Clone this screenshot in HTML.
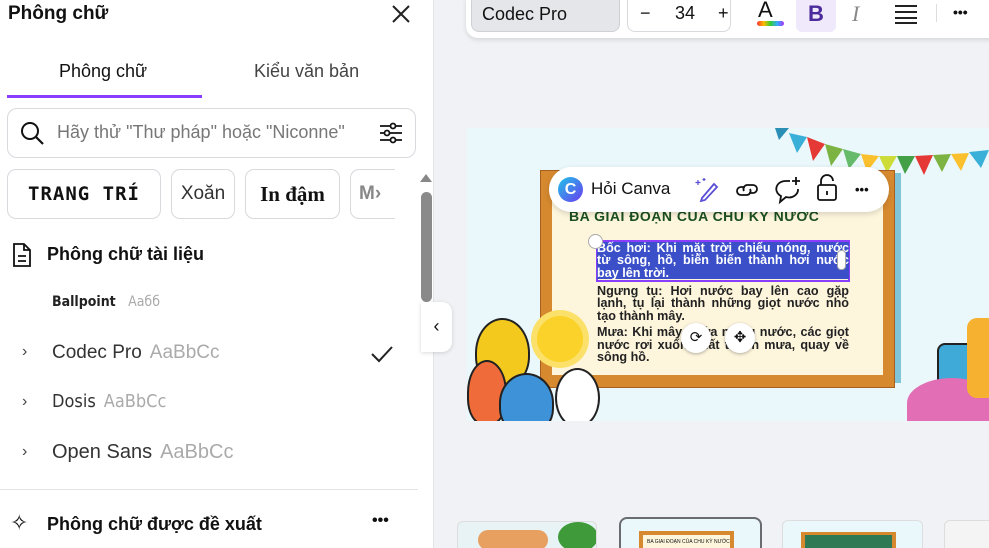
<!DOCTYPE html><html><head><meta charset="utf-8"><style>
*{box-sizing:border-box;margin:0;padding:0}
html,body{width:989px;height:548px;overflow:hidden}
body{background:#f1f2f5;font-family:"Liberation Sans","Noto Sans CJK SC",sans-serif;position:relative;color:#111}
.a{position:absolute}
.panel{left:0;top:0;width:434px;height:548px;background:#fff;border-right:1px solid #e3e4e8}
.b{font-weight:bold}
.chip{position:absolute;top:169px;height:50px;border:1px solid #d8d9dd;border-radius:9px;background:#fff;display:flex;align-items:center;justify-content:center;font-size:19px}
.fn{position:absolute;left:52px;font-size:19px;color:#333}
.fn span{color:#aaa;margin-left:8px}
.chev{position:absolute;left:22px;font-size:16px;color:#444}
.st{position:absolute;left:130px;width:252px;font-weight:bold;font-size:12.6px;line-height:12.3px;color:#222;text-align:justify}
</style></head><body>
<div class="a panel">
 <div class="a b" style="left:8px;top:3px;font-size:19px">Phông chữ</div>
 <svg class="a" style="left:390px;top:3px" width="22" height="22" viewBox="0 0 22 22"><path d="M3 3L19 19M19 3L3 19" stroke="#222" stroke-width="2"/></svg>
 <div class="a" style="left:59px;top:61px;font-size:18px">Phông chữ</div>
 <div class="a" style="left:254px;top:61px;font-size:18px;color:#444">Kiểu văn bản</div>
 <div class="a" style="left:7px;top:95px;width:195px;height:3px;background:#8b3dff"></div>
 <div class="a" style="left:7px;top:108px;width:409px;height:50px;border:1px solid #d8d9dd;border-radius:10px"></div>
 <svg class="a" style="left:20px;top:121px" width="26" height="26" viewBox="0 0 26 26"><circle cx="10" cy="10" r="8" fill="none" stroke="#111" stroke-width="2"/><path d="M16 16L23 23" stroke="#111" stroke-width="2.2"/></svg>
 <div class="a" style="left:57px;top:122px;font-size:18px;color:#777">Hãy thử "Thư pháp" hoặc "Niconne"</div>
 <svg class="a" style="left:378px;top:120px" width="26" height="26" viewBox="0 0 26 26" fill="none" stroke="#111" stroke-width="1.8"><path d="M2 6H24M2 13H24M2 20H24"/><circle cx="15" cy="6" r="2.5" fill="#fff"/><circle cx="9" cy="13" r="2.5" fill="#fff"/><circle cx="15" cy="20" r="2.5" fill="#fff"/></svg>
 <div class="chip b" style="left:7px;width:154px;font-family:'DejaVu Sans Mono';font-size:19px;letter-spacing:1px">TRANG TRÍ</div>
 <div class="chip" style="left:171px;width:64px;color:#333">Xoăn</div>
 <div class="chip b" style="left:245px;width:95px;font-family:'Liberation Serif';font-size:21px">In đậm</div>
 <div class="chip b" style="left:350px;width:45px;border-right:none;border-radius:9px 0 0 9px;color:#888;justify-content:flex-start;padding-left:8px">M›</div>
 <div class="a" style="left:420px;top:174px;width:0;height:0;border-left:6px solid transparent;border-right:6px solid transparent;border-bottom:8px solid #888"></div>
 <div class="a" style="left:421px;top:192px;width:11px;height:110px;background:#8a8a8a;border-radius:6px"></div>
 <svg class="a" style="left:12px;top:242px" width="20" height="26" viewBox="0 0 20 26" fill="none" stroke="#111" stroke-width="1.8"><path d="M2 2H12L18 8V24H2Z M12 2V8H18 M6 14H14M6 19H14"/></svg>
 <div class="a b" style="left:47px;top:244px;font-size:18px">Phông chữ tài liệu</div>
 <div class="fn" style="top:294px;font-size:14px;font-weight:bold;color:#222;font-family:'DejaVu Sans Condensed'">Ballpoint <span style="font-weight:normal">Aaбб</span></div>
 <div class="chev" style="top:343px">›</div><div class="fn" style="top:342px">Codec Pro<span>AaBbCc</span></div>
 <svg class="a" style="left:370px;top:344px" width="24" height="20" viewBox="0 0 24 20"><path d="M2 10L9 17L22 3" stroke="#222" stroke-width="2" fill="none"/></svg>
 <div class="chev" style="top:393px">›</div><div class="fn" style="top:391px;font-family:'DejaVu Sans Condensed';font-size:18px">Dosis<span>AaBbCc</span></div>
 <div class="chev" style="top:443px">›</div><div class="fn" style="top:441px;font-size:20px">Open Sans<span>AaBbCc</span></div>
 <div class="a" style="left:0;top:489px;width:418px;height:1px;background:#e2e3e6"></div>
 <div class="a" style="left:10px;top:510px;font-size:22px">✧</div>
 <div class="a b" style="left:47px;top:514px;font-size:18px">Phông chữ được đề xuất</div>
 <div class="a b" style="left:372px;top:512px;font-size:16px">•••</div>
</div>
<div class="a" style="left:421px;top:302px;width:31px;height:50px;background:#fff;border-radius:0 10px 10px 0;box-shadow:0 1px 4px rgba(0,0,0,.15);font-size:18px;text-align:center;line-height:48px">‹</div>
<!-- top toolbar -->
<div class="a" style="left:466px;top:-10px;width:540px;height:48px;background:#fff;border-radius:12px;box-shadow:0 2px 5px rgba(0,0,0,.12)"></div>
<div class="a" style="left:471px;top:-6px;width:149px;height:38px;background:#e5e6ea;border:1px solid #cfd0d4;border-radius:8px;font-size:18px;padding:9px 10px">Codec Pro</div>
<div class="a" style="left:627px;top:-6px;width:104px;height:38px;border:1px solid #d8d9dd;border-radius:8px"></div>
<div class="a" style="left:640px;top:3px;font-size:18px">−</div><div class="a" style="left:675px;top:3px;font-size:18px">34</div><div class="a" style="left:718px;top:3px;font-size:18px">+</div>
<div class="a" style="left:758px;top:-3px;font-size:22px">A</div>
<div class="a" style="left:757px;top:21px;width:27px;height:5px;border-radius:3px;background:linear-gradient(90deg,#f33,#fb0,#3c3,#3af,#a3f)"></div>
<div class="a b" style="left:796px;top:-5px;width:40px;height:37px;background:#efe9fb;border-radius:6px;color:#4b2a9b;font-size:22px;text-align:center;padding-top:6px">B</div>
<div class="a" style="left:852px;top:1px;font-size:22px;font-style:italic;color:#888;font-family:'Liberation Serif'">I</div>
<svg class="a" style="left:894px;top:4px" width="24" height="20"><path d="M1 2H23M1 8H23M1 14H23M1 19H23" stroke="#222" stroke-width="2"/></svg>
<div class="a" style="left:936px;top:4px;width:1px;height:18px;background:#ddd"></div>
<div class="a b" style="left:953px;top:4px;font-size:14px">•••</div>
<!-- slide -->
<div class="a" style="left:467px;top:128px;width:522px;height:293px;background:#eaf8fc;overflow:hidden">
 <svg class="a" style="left:300px;top:0" width="222" height="50"><g>
 <path d="M8 0L22 0 12 12Z" fill="#2b8fb5"/><path d="M22 5L40 9 30 25Z" fill="#3ab0d8"/><path d="M40 9L58 16 46 33Z" fill="#e53935"/><path d="M58 16L76 21 64 38Z" fill="#7cb342"/><path d="M76 21L94 26 82 41Z" fill="#66bb6a"/><path d="M94 26L112 28 100 44Z" fill="#fbc02d"/><path d="M112 28L130 28 120 45Z" fill="#cddc39"/><path d="M130 28L148 28 138 46Z" fill="#43a047"/><path d="M148 28L166 27 157 47Z" fill="#e53935"/><path d="M166 27L184 26 175 44Z" fill="#7cb342"/><path d="M184 26L202 25 194 43Z" fill="#fbc02d"/><path d="M202 24L222 22 214 40Z" fill="#3ab0d8"/></g></svg>
 <div class="a" style="left:73px;top:42px;width:355px;height:218px;background:#d6892f;border:1px solid #a86020"></div>
 <div class="a" style="left:428px;top:45px;width:6px;height:210px;background:#7fc4d8"></div>
 <div class="a" style="left:85px;top:54px;width:331px;height:193px;background:#fdf5dc"></div>
 <div class="a b" style="left:102px;top:80px;font-size:14px;color:#1a5020;letter-spacing:.5px">BA GIAI ĐOẠN CỦA CHU KỲ NƯỚC</div>
 <div class="a" style="left:129px;top:112px;width:254px;height:42px;border:2px solid #8b3dff"></div>
 <div class="st" style="top:114px;color:#fff;background:#3a4fc8">Bốc hơi: Khi mặt trời chiếu nóng, nước từ sông, hồ, biển biến thành hơi nước bay lên trời.</div>
 <div class="st" style="top:157px">Ngưng tụ: Hơi nước bay lên cao gặp lạnh, tụ lại thành những giọt nước nhỏ tạo thành mây.</div>
 <div class="st" style="top:198px;line-height:12.7px">Mưa: Khi mây chứa nhiều nước, các giọt nước rơi xuống đất thành mưa, quay về sông hồ.</div>
 <div class="a" style="left:121px;top:106px;width:15px;height:15px;border-radius:50%;background:#fff;border:1px solid #aaa"></div>
 <div class="a" style="left:370px;top:122px;width:9px;height:20px;border-radius:4px;background:#fff;border:1px solid #aaa"></div>
 <div class="a" style="left:214px;top:195px;width:30px;height:30px;border-radius:50%;background:#fff;box-shadow:0 1px 3px rgba(0,0,0,.3);text-align:center;line-height:30px;font-size:15px">⟳</div>
 <div class="a" style="left:258px;top:195px;width:30px;height:30px;border-radius:50%;background:#fff;box-shadow:0 1px 3px rgba(0,0,0,.3);text-align:center;line-height:30px;font-size:15px">✥</div>
 <div class="a" style="left:8px;top:190px;width:55px;height:70px;background:#f4c91e;border:2px solid #222;border-radius:50% 50% 45% 45%"></div>
 <div class="a" style="left:0;top:232px;width:40px;height:65px;background:#ef6c3a;border:2px solid #222;border-radius:50% 50% 40% 40%"></div>
 <div class="a" style="left:32px;top:245px;width:55px;height:60px;background:#3d92d8;border:2px solid #222;border-radius:50% 50% 40% 40%"></div>
 <div class="a" style="left:88px;top:240px;width:45px;height:60px;background:#fff;border:2px solid #222;border-radius:50%"></div>
 <div class="a" style="left:70px;top:188px;width:46px;height:46px;border-radius:50%;background:#fbd22a;box-shadow:0 0 0 6px #fbe16a"></div>
 <div class="a" style="left:470px;top:215px;width:45px;height:45px;background:#3fa9d8;border:2px solid #222;border-radius:8px"></div>
 <div class="a" style="left:440px;top:250px;width:90px;height:50px;border-radius:50% 50% 0 0;background:#e26fb5"></div>
 <div class="a" style="left:500px;top:190px;width:30px;height:80px;background:#f6b130;border-radius:10px"></div>
</div>
<!-- floating pill -->
<div class="a" style="left:549px;top:167px;width:340px;height:45px;background:#fff;border-radius:23px;box-shadow:0 2px 6px rgba(0,0,0,.15)"></div>
<div class="a" style="left:558px;top:177px;width:25px;height:25px;border-radius:50%;background:linear-gradient(135deg,#20c4e8,#6a3cf0);color:#fff;font-weight:bold;text-align:center;line-height:25px;font-size:16px">C</div>
<div class="a" style="left:591px;top:179px;font-size:17px">Hỏi Canva</div>
<svg class="a" style="left:694px;top:176px" width="26" height="26" viewBox="0 0 26 26" fill="none" stroke="#5a4fd6" stroke-width="1.8"><path d="M8 22L20 8 23 11 11 24 7 25Z"/><path d="M4 4V9M1.5 6.5H6.5M10 2V5M8.5 3.5H11.5" stroke-width="1.2"/></svg>
<svg class="a" style="left:734px;top:179px" width="26" height="22" viewBox="0 0 26 22" fill="none" stroke="#111" stroke-width="1.8"><path d="M11 8H7a4 4 0 0 0 0 8h6a4 4 0 0 0 3-6M15 14h4a4 4 0 0 0 0-8h-6a4 4 0 0 0-3 6"/></svg>
<svg class="a" style="left:773px;top:175px" width="30" height="30" viewBox="0 0 30 30" fill="none" stroke="#111" stroke-width="1.8"><path d="M17 6H13a9 8 0 0 0-5 15L7 27 13 22a9 8 0 0 0 12-8"/><path d="M23 2V10M19 6H27"/></svg>
<svg class="a" style="left:815px;top:173px" width="24" height="30" viewBox="0 0 24 30" fill="none" stroke="#111" stroke-width="1.8"><path d="M6 12V8a6 6 0 0 1 12 0"/><rect x="3" y="12" width="18" height="15" rx="2"/><path d="M12 18V22"/></svg>
<div class="a b" style="left:855px;top:182px;font-size:13px">•••</div>
<!-- thumbnails -->
<div class="a" style="left:457px;top:521px;width:140px;height:27px;background:#e8f3f6;border:1px solid #ddd;border-bottom:none;border-radius:6px 6px 0 0;overflow:hidden"><div class="a" style="left:100px;top:0;width:40px;height:30px;background:#3f9a3a;border-radius:50%"></div><div class="a" style="left:20px;top:8px;width:70px;height:20px;background:#e8a060;border-radius:10px"></div></div>
<div class="a" style="left:619px;top:517px;width:143px;height:31px;border:2px solid #6b6c72;border-bottom:none;border-radius:8px 8px 0 0;background:#eaf8fc;overflow:hidden"><div class="a" style="left:18px;top:12px;width:95px;height:30px;background:#d6892f"></div><div class="a" style="left:22px;top:16px;width:87px;height:30px;background:#fdf5dc;font-size:5px;padding:4px;white-space:nowrap">BA GIAI ĐOẠN CỦA CHU KỲ NƯỚC</div></div>
<div class="a" style="left:782px;top:520px;width:141px;height:28px;border:1px solid #ddd;border-bottom:none;border-radius:6px 6px 0 0;background:#eaf8fc;overflow:hidden"><div class="a" style="left:18px;top:11px;width:95px;height:30px;background:#d6892f"></div><div class="a" style="left:22px;top:14px;width:87px;height:30px;background:#2f7a55"></div></div>
<div class="a" style="left:944px;top:520px;width:60px;height:28px;border:1px solid #ddd;border-bottom:none;border-radius:6px 6px 0 0;background:#f4f4f4"></div>
</body></html>
